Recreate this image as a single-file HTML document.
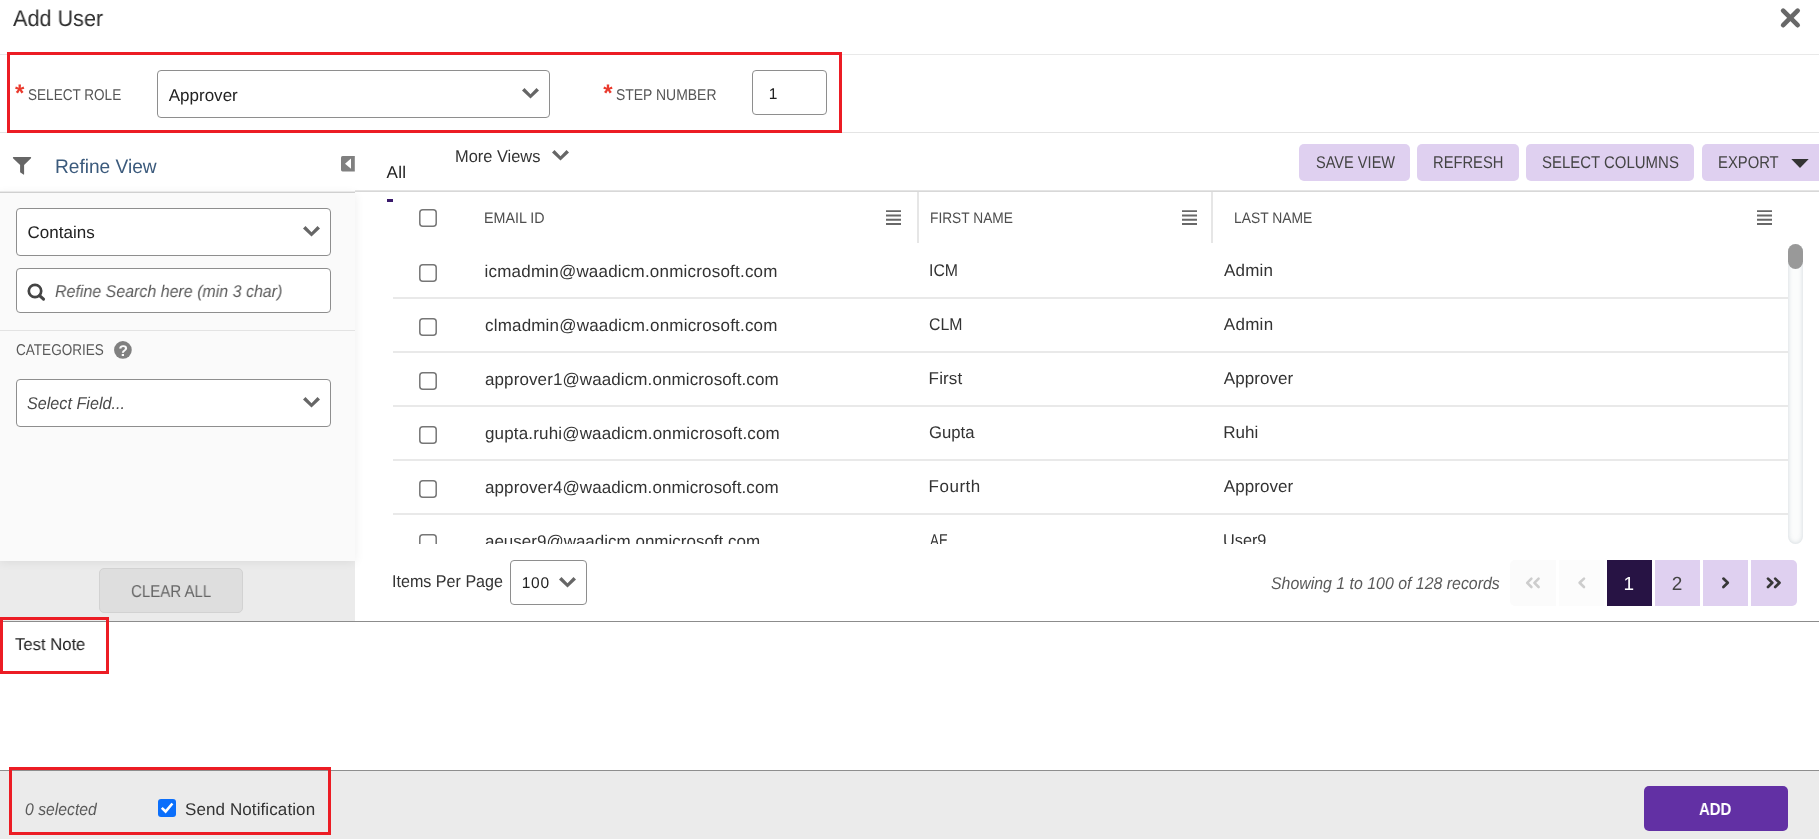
<!DOCTYPE html>
<html lang="en"><head><meta charset="utf-8"><title>Add User</title>
<style>
html,body{margin:0;padding:0;}
body{width:1819px;height:839px;overflow:hidden;background:#fff;position:relative;font-family:"Liberation Sans",sans-serif;}
.a{position:absolute;box-sizing:border-box;}
.t{position:absolute;text-rendering:geometricPrecision;transform-origin:0 50%;white-space:nowrap;line-height:24px;height:24px;}
.hl{position:absolute;height:1px;background:#e6e6e6;}
.red{position:absolute;box-sizing:border-box;border:3px solid #ec1c24;}
.box{position:absolute;box-sizing:border-box;border:1px solid #8e8e8e;border-radius:4px;background:#fff;}
.cb{position:absolute;box-sizing:border-box;width:18px;height:18px;border:1.5px solid #767676;border-radius:3.5px;background:#fff;}
.lav{position:absolute;box-sizing:border-box;background:#dfd0f0;border-radius:5px;}
.rowline{position:absolute;left:393px;width:1395px;height:2px;background:#e9e9e9;}
.pg{position:absolute;top:560px;height:46px;box-sizing:border-box;}
svg{position:absolute;overflow:visible;}
.tx{position:absolute;left:0;top:0;width:0;height:0;will-change:transform;}
header,section,aside,main,footer{display:contents;}

</style></head>
<body>
<header class="modal-header">
<div class="hl" style="left:0;top:54px;width:1819px;background:#e9e9e9;"></div>
<!-- close X -->
<svg style="left:1781px;top:8px;" width="20" height="20" viewBox="0 0 20 20"><path d="M2.15 2.65 L16.65 17.15 M16.65 2.65 L2.15 17.15" stroke="#686868" stroke-width="4.7" stroke-linecap="round" fill="none"/></svg>
<div class="tx">
<span class="t modal-title" id="title" style="left:13.26px;top:6.00px;font-size:22.7px;color:#2f2f2f;transform:scaleX(0.9527);">Add User</span>
</div>
</header>

<section class="role-form">
<div class="hl" style="left:0;top:132px;width:1819px;background:#e4e4e4;"></div>
<!-- role select + step input -->
<div class="box" style="left:157px;top:70px;width:393px;height:48px;"></div>
<svg style="left:522px;top:88px;" width="17" height="11" viewBox="0 0 17 11"><path d="M2.5 0.1 L0 2.5 L8.5 10.4 L17 2.5 L14.5 0.1 L8.5 6.3 Z" fill="#666"/></svg>
<div class="box" style="left:752px;top:70px;width:75px;height:45px;"></div>
<div class="tx">
<span class="t required" id="ast1" style="left:14.93px;top:82.00px;font-size:24px;color:#ea3a2d;font-weight:bold;">*</span>
<span class="t required" id="ast2" style="left:603.13px;top:82.00px;font-size:24px;color:#ea3a2d;font-weight:bold;">*</span>
<span class="t field-label" id="lblrole" style="left:27.68px;top:84.00px;font-size:15.6px;color:#555;transform:scaleX(0.8695);">SELECT ROLE</span>
<span class="t select-value" id="valrole" style="left:168.67px;top:84.00px;font-size:17px;color:#222;letter-spacing:0.019px;">Approver</span>
<span class="t field-label" id="lblstep" style="left:616.17px;top:84.00px;font-size:15.6px;color:#555;transform:scaleX(0.8943);">STEP NUMBER</span>
<span class="t input-value" id="valstep" style="left:768.82px;top:83.00px;font-size:15.5px;color:#222;">1</span>
</div>
<div class="red annotation" style="left:7px;top:52px;width:835px;height:81px;"></div>
</section>

<aside class="refine-panel">
<!-- left panel -->
<div class="a" style="left:0;top:561px;width:355px;height:60px;background:#ebebeb;"></div>
<div class="a" style="left:0;top:193px;width:355px;height:368px;background:#fafafa;box-shadow:0 1px 10px rgba(0,0,0,0.075);"></div>
<div class="a" style="left:0;top:191px;width:355px;height:1px;background:#e9e9e9;"></div><div class="a" style="left:0;top:192px;width:355px;height:1px;background:#d0d0d0;"></div>
<div class="hl" style="left:0;top:330px;width:355px;background:#e3e3e3;"></div>

<!-- funnel -->
<svg style="left:13px;top:157px;" width="19" height="19" viewBox="0 0 19 19"><path d="M0.6 0 H17.4 Q18.6 0.1 18 1.3 L11.1 8.1 V17.2 Q11 17.9 10.4 17.5 L7.1 15.3 V8.1 L0 1.3 Q-0.5 0.1 0.6 0 Z" fill="#666"/></svg>
<!-- collapse icon -->
<svg style="left:341px;top:155.5px;" width="14" height="16" viewBox="0 0 14 16"><path d="M1.6 0 H13.8 V15.4 H1.6 Q0 15.4 0 13.8 V1.6 Q0 0 1.6 0 Z" fill="#808080"/><path d="M10 2.6 V12.7 L4 7.7 Z" fill="#fff"/></svg>

<!-- contains select -->
<div class="box" style="left:16px;top:208px;width:315px;height:48px;"></div>
<svg style="left:303px;top:226px;" width="17" height="11" viewBox="0 0 17 11"><path d="M2.5 0.1 L0 2.5 L8.5 10.4 L17 2.5 L14.5 0.1 L8.5 6.3 Z" fill="#666"/></svg>
<!-- search box -->
<div class="box" style="left:16px;top:268px;width:315px;height:45px;"></div>
<svg style="left:27.1px;top:283.5px;" width="19" height="19" viewBox="0 0 19 19"><circle cx="8" cy="7" r="6.2" stroke="#444" stroke-width="2.7" fill="none"/><path d="M12.6 11.6 L16.5 15.2" stroke="#444" stroke-width="3.1" stroke-linecap="round"/></svg>
<!-- categories help -->
<svg style="left:114.1px;top:341.3px;" width="18" height="18" viewBox="0 0 18 18"><circle cx="8.9" cy="8.9" r="8.85" fill="#808080"/></svg>
<!-- select field -->
<div class="box" style="left:16px;top:379px;width:315px;height:48px;"></div>
<svg style="left:303px;top:397px;" width="17" height="11" viewBox="0 0 17 11"><path d="M2.5 0.1 L0 2.5 L8.5 10.4 L17 2.5 L14.5 0.1 L8.5 6.3 Z" fill="#666"/></svg>
<!-- clear all -->
<div class="a" style="left:99px;top:568px;width:144px;height:45px;background:#dedede;border:1px solid #d2d2d2;border-radius:5px;"></div>
<div class="tx">
<span class="t panel-title" id="refine" style="left:54.83px;top:155.00px;font-size:19.6px;color:#3b5a7c;transform:scaleX(0.9752);">Refine View</span>
<span class="t select-value" id="contains" style="left:27.44px;top:221.00px;font-size:17px;color:#222;letter-spacing:0.038px;">Contains</span>
<span class="t placeholder" id="ph" style="left:55.11px;top:280.00px;font-size:17px;color:#5a5a5a;transform:scaleX(0.9399);font-style:italic;">Refine Search here (min 3 char)</span>
<span class="t field-label" id="cat" style="left:16.01px;top:339.00px;font-size:15.6px;color:#5a5a5a;transform:scaleX(0.8696);">CATEGORIES</span>
<span class="t help-icon" id="help" style="left:118.59px;top:340.00px;font-size:15.5px;color:#fbfbfb;font-weight:bold;">?</span>
<span class="t placeholder" id="selfield" style="left:27.44px;top:392.00px;font-size:17px;color:#4a4a4a;transform:scaleX(0.9509);font-style:italic;">Select Field...</span>
<span class="t btn-label" id="clear" style="left:131.24px;top:579.00px;font-size:17.2px;color:#666;transform:scaleX(0.8739);">CLEAR ALL</span>
</div>
</aside>

<main class="user-grid">
<div class="a" style="left:355px;top:190px;width:1464px;height:1px;background:#e4e4e4;"></div><div class="a" style="left:355px;top:191px;width:1464px;height:1px;background:#d8d8d8;"></div>
<!-- more views chevron -->
<svg style="left:552px;top:150.3px;" width="17" height="11" viewBox="0 0 17 11"><path d="M2.5 0.1 L0 2.5 L8.5 10.4 L17 2.5 L14.5 0.1 L8.5 6.3 Z" fill="#666"/></svg>

<!-- toolbar buttons -->
<div class="lav" style="left:1299px;top:144px;width:111px;height:37px;"></div>
<div class="lav" style="left:1417px;top:144px;width:102px;height:37px;"></div>
<div class="lav" style="left:1526px;top:144px;width:168px;height:37px;"></div>
<div class="lav" style="left:1702px;top:144px;width:140px;height:37px;"></div>
<svg style="left:1790.5px;top:158.5px;" width="18" height="9" viewBox="0 0 18 9"><path d="M0.3 0 H17.7 L9 9 Z" fill="#333"/></svg>

<!-- grid header -->
<div class="a" style="left:387px;top:199px;width:6px;height:3px;background:#3a1a6b;"></div>
<svg style="left:419px;top:209px;" width="18" height="18" viewBox="0 0 18 18"><rect x="0.8" y="0.8" width="16.4" height="16.4" rx="3" fill="#fff" stroke="#767676" stroke-width="1.5"/></svg>
<div class="a" style="left:917px;top:192px;width:2px;height:51px;background:#e6e6e6;"></div>
<div class="a" style="left:1211px;top:192px;width:2px;height:51px;background:#e6e6e6;"></div>
<svg style="left:886px;top:210px;" width="15" height="15" viewBox="0 0 15 15"><path d="M0 1.1 H15 M0 5.5 H15 M0 9.75 H15 M0 14 H15" stroke="#686868" stroke-width="1.9"/></svg>
<svg style="left:1182px;top:210px;" width="15" height="15" viewBox="0 0 15 15"><path d="M0 1.1 H15 M0 5.5 H15 M0 9.75 H15 M0 14 H15" stroke="#686868" stroke-width="1.9"/></svg>
<svg style="left:1756.5px;top:210px;" width="15" height="15" viewBox="0 0 15 15"><path d="M0 1.1 H15 M0 5.5 H15 M0 9.75 H15 M0 14 H15" stroke="#686868" stroke-width="1.9"/></svg>

<!-- rows -->
<svg style="left:419px;top:264px;" width="18" height="18" viewBox="0 0 18 18"><rect x="0.8" y="0.8" width="16.4" height="16.4" rx="3" fill="#fff" stroke="#767676" stroke-width="1.5"/></svg>
<div class="rowline" style="top:297px;"></div>
<svg style="left:419px;top:318px;" width="18" height="18" viewBox="0 0 18 18"><rect x="0.8" y="0.8" width="16.4" height="16.4" rx="3" fill="#fff" stroke="#767676" stroke-width="1.5"/></svg>
<div class="rowline" style="top:351px;"></div>
<svg style="left:419px;top:372px;" width="18" height="18" viewBox="0 0 18 18"><rect x="0.8" y="0.8" width="16.4" height="16.4" rx="3" fill="#fff" stroke="#767676" stroke-width="1.5"/></svg>
<div class="rowline" style="top:405px;"></div>
<svg style="left:419px;top:426px;" width="18" height="18" viewBox="0 0 18 18"><rect x="0.8" y="0.8" width="16.4" height="16.4" rx="3" fill="#fff" stroke="#767676" stroke-width="1.5"/></svg>
<div class="rowline" style="top:459px;"></div>
<svg style="left:419px;top:480px;" width="18" height="18" viewBox="0 0 18 18"><rect x="0.8" y="0.8" width="16.4" height="16.4" rx="3" fill="#fff" stroke="#767676" stroke-width="1.5"/></svg>
<div class="rowline" style="top:513px;"></div>
<svg style="left:419px;top:534px;" width="18" height="18" viewBox="0 0 18 18"><rect x="0.8" y="0.8" width="16.4" height="16.4" rx="3" fill="#fff" stroke="#767676" stroke-width="1.5"/></svg>

<!-- scrollbar -->
<div class="a" style="left:1788px;top:244px;width:15px;height:300px;border-radius:7.5px;background:#fbfcfc;box-shadow:inset 0 0 5px rgba(120,140,155,0.32);"></div>
<div class="a" style="left:1788px;top:244px;width:15px;height:25px;border-radius:7.5px;background:#999;"></div>

<!-- items per page select -->
<div class="box" style="left:510px;top:560px;width:77px;height:45px;"></div>
<svg style="left:559.2px;top:577.3px;" width="17" height="11" viewBox="0 0 17 11"><path d="M2.5 0.1 L0 2.5 L8.5 10.4 L17 2.5 L14.5 0.1 L8.5 6.3 Z" fill="#666"/></svg>

<!-- pagination -->
<div class="pg" style="left:1510px;width:46px;background:#fbfbfb;border-radius:5px 0 0 5px;"></div>
<div class="pg" style="left:1559px;width:45px;background:#fcfcfc;"></div>
<div class="pg" style="left:1607px;width:45px;background:#271344;"></div>
<div class="pg" style="left:1655px;width:45px;background:#dfd0f0;"></div>
<div class="pg" style="left:1703px;width:45px;background:#dfd0f0;"></div>
<div class="pg" style="left:1751px;width:46px;background:#dfd0f0;border-radius:0 5px 5px 0;"></div>
<svg style="left:1525px;top:577.4px;" width="16" height="12" viewBox="0 0 16 12"><path d="M6.4 1.6 L2.2 5.8 L6.4 10 M13.6 1.6 L9.4 5.8 L13.6 10" stroke="#cdcdcd" stroke-width="2.6" fill="none" stroke-linecap="round" stroke-linejoin="round"/></svg>
<svg style="left:1576px;top:577.4px;" width="10" height="12" viewBox="0 0 10 12"><path d="M8 1.6 L3.6 5.8 L8 10" stroke="#cdcdcd" stroke-width="2.6" fill="none" stroke-linecap="round" stroke-linejoin="round"/></svg>
<svg style="left:1720.6px;top:577.4px;" width="10" height="12" viewBox="0 0 10 12"><path d="M2.4 1.6 L6.8 5.8 L2.4 10" stroke="#383838" stroke-width="2.7" fill="none" stroke-linecap="round" stroke-linejoin="round"/></svg>
<svg style="left:1766px;top:577.4px;" width="16" height="12" viewBox="0 0 16 12"><path d="M2 1.6 L6.3 5.8 L2 10 M9.2 1.6 L13.5 5.8 L9.2 10" stroke="#383838" stroke-width="2.7" fill="none" stroke-linecap="round" stroke-linejoin="round"/></svg>
<div class="hl" style="left:0;top:621px;width:1819px;background:#8c8c8c;"></div>
<div class="tx">
<span class="t tab" id="all" style="left:386.47px;top:161.00px;font-size:17px;color:#222;letter-spacing:0.332px;">All</span>
<span class="t tab" id="more" style="left:454.75px;top:145.00px;font-size:17px;color:#333;transform:scaleX(0.9654);">More Views</span>
<span class="t btn-label" id="b1" style="left:1315.64px;top:151.00px;font-size:17px;color:#444;transform:scaleX(0.8574);">SAVE VIEW</span>
<span class="t btn-label" id="b2" style="left:1433.49px;top:151.00px;font-size:17px;color:#444;transform:scaleX(0.8668);">REFRESH</span>
<span class="t btn-label" id="b3" style="left:1542.32px;top:151.00px;font-size:17px;color:#444;transform:scaleX(0.8798);">SELECT COLUMNS</span>
<span class="t btn-label" id="b4" style="left:1717.68px;top:151.00px;font-size:17px;color:#444;transform:scaleX(0.8716);">EXPORT</span>
<span class="t col-header" id="h1" style="left:484.43px;top:207.00px;font-size:15.2px;color:#4e4e4e;transform:scaleX(0.9400);">EMAIL ID</span>
<span class="t col-header" id="h2" style="left:929.97px;top:207.00px;font-size:15.2px;color:#4e4e4e;transform:scaleX(0.9042);">FIRST NAME</span>
<span class="t col-header" id="h3" style="left:1233.56px;top:207.00px;font-size:15.2px;color:#4e4e4e;transform:scaleX(0.9129);">LAST NAME</span>
<span class="t cell" id="e0" style="left:484.56px;top:260.00px;font-size:17px;color:#333;letter-spacing:0.205px;">icmadmin@waadicm.onmicrosoft.com</span>
<span class="t cell" id="f0" style="left:928.84px;top:259.00px;font-size:17px;color:#333;transform:scaleX(0.9323);">ICM</span>
<span class="t cell" id="l0" style="left:1224.07px;top:259.00px;font-size:17px;color:#333;letter-spacing:0.162px;">Admin</span>
<span class="t cell" id="e1" style="left:484.98px;top:314.00px;font-size:17px;color:#333;letter-spacing:0.191px;">clmadmin@waadicm.onmicrosoft.com</span>
<span class="t cell" id="f1" style="left:928.60px;top:313.00px;font-size:17px;color:#333;transform:scaleX(0.9302);">CLM</span>
<span class="t cell" id="l1" style="left:1223.77px;top:313.00px;font-size:17px;color:#333;letter-spacing:0.287px;">Admin</span>
<span class="t cell" id="e2" style="left:484.98px;top:368.00px;font-size:17px;color:#333;letter-spacing:0.104px;">approver1@waadicm.onmicrosoft.com</span>
<span class="t cell" id="f2" style="left:928.61px;top:367.00px;font-size:17px;color:#333;letter-spacing:0.143px;">First</span>
<span class="t cell" id="l2" style="left:1223.77px;top:367.00px;font-size:17px;color:#333;letter-spacing:0.062px;">Approver</span>
<span class="t cell" id="e3" style="left:484.99px;top:422.00px;font-size:17px;color:#333;letter-spacing:0.162px;">gupta.ruhi@waadicm.onmicrosoft.com</span>
<span class="t cell" id="f3" style="left:928.56px;top:421.00px;font-size:17px;color:#333;transform:scaleX(0.9811);">Gupta</span>
<span class="t cell" id="l3" style="left:1223.31px;top:421.00px;font-size:17px;color:#333;letter-spacing:0.024px;">Ruhi</span>
<span class="t cell" id="e4" style="left:484.98px;top:476.00px;font-size:17px;color:#333;letter-spacing:0.104px;">approver4@waadicm.onmicrosoft.com</span>
<span class="t cell" id="f4" style="left:928.61px;top:475.00px;font-size:17px;color:#333;letter-spacing:0.492px;">Fourth</span>
<span class="t cell" id="l4" style="left:1223.77px;top:475.00px;font-size:17px;color:#333;letter-spacing:0.062px;">Approver</span>
<span class="t cell" id="e5" style="left:484.98px;top:530.00px;font-size:17px;color:#333;letter-spacing:-0.002px;">aeuser9@waadicm.onmicrosoft.com</span>
<span class="t cell" id="f5" style="left:929.97px;top:529.00px;font-size:17px;color:#333;transform:scaleX(0.7845);">AE</span>
<span class="t cell" id="l5" style="left:1223.44px;top:529.00px;font-size:17px;color:#333;transform:scaleX(0.9574);">User9</span>
<span class="t pager-label" id="ipp" style="left:392.01px;top:570.00px;font-size:17px;color:#333;transform:scaleX(0.9473);">Items Per Page</span>
<span class="t select-value" id="v100" style="left:521.72px;top:572.00px;font-size:15.5px;color:#222;letter-spacing:0.756px;">100</span>
<span class="t pager-info" id="showing" style="left:1271.45px;top:572.00px;font-size:17px;color:#5a5a5a;transform:scaleX(0.9346);font-style:italic;">Showing 1 to 100 of 128 records</span>
<span class="t page-num" id="p1" style="left:1623.45px;top:573.00px;font-size:19px;color:#fff;">1</span>
<span class="t page-num" id="p2" style="left:1671.74px;top:573.00px;font-size:19px;color:#444;">2</span>
</div>
<div class="a" style="left:392px;top:544px;width:1396px;height:15px;background:#fff;"></div>
</main>

<section class="note">
<div class="tx">
<span class="t note-text" id="note" style="left:14.63px;top:633.00px;font-size:17px;color:#222;transform:scaleX(0.9791);">Test Note</span>
</div>
<div class="red annotation" style="left:0;top:617px;width:109px;height:57px;"></div>
</section>

<footer class="modal-footer">
<!-- footer -->
<div class="a" style="left:0;top:770px;width:1819px;height:69px;background:#ebebeb;border-top:1px solid #8e8e8e;"></div>
<svg style="left:158px;top:799px;" width="18" height="18" viewBox="0 0 18 18"><rect x="0" y="0" width="18" height="18" rx="3" fill="#0b6ffb"/><path d="M3.8 8.9 L7.6 12.5 L14.4 4.5" stroke="#fff" stroke-width="2.6" fill="none" stroke-linecap="butt" stroke-linejoin="miter"/></svg>
<div class="a" style="left:1644px;top:786px;width:144px;height:45px;background:#6230a4;border-radius:5px;"></div>
<div class="tx">
<span class="t selected-count" id="sel0" style="left:24.62px;top:798.00px;font-size:17px;color:#5a5a5a;transform:scaleX(0.9261);font-style:italic;">0 selected</span>
<span class="t checkbox-label" id="send" style="left:185.03px;top:798.00px;font-size:17px;color:#333;letter-spacing:0.097px;">Send Notification</span>
<span class="t btn-label" id="add" style="left:1699.23px;top:797.00px;font-size:17.4px;color:#fff;transform:scaleX(0.8597);font-weight:bold;">ADD</span>
</div>
<div class="red annotation" style="left:9px;top:767px;width:322px;height:68px;"></div>
</footer>

</body></html>
